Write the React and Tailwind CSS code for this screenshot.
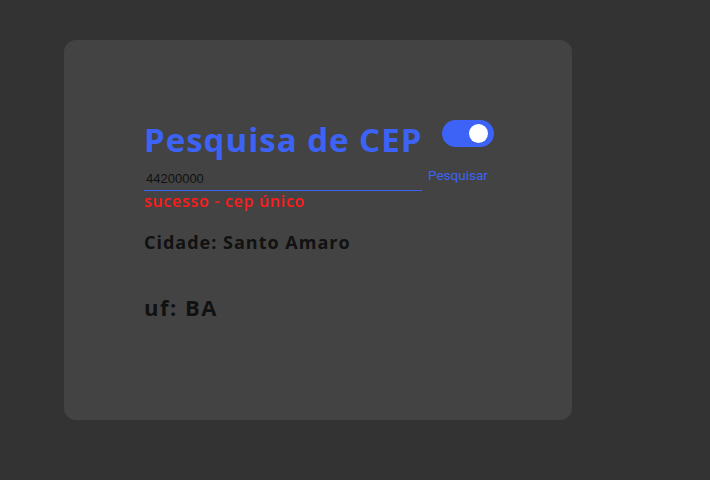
export default function App() {
  return (
    <div className="w-[710px] h-[480px] bg-[#333333] pt-10 pl-16">
      <div className="w-[508px] h-[380px] bg-[#434343] rounded-xl pl-20 pt-[80px]">
        <div className="flex items-start">
          <h1 className="w-[276px] whitespace-nowrap font-['Open_Sans',sans-serif] font-bold text-[33px] leading-[40px] text-[#3c63f5] tracking-[1px]">
            Pesquisa de CEP
          </h1>
          <div className="ml-[22px] w-[52px] h-[27px] rounded-full bg-[#3c63f5] flex items-center justify-end pr-[6px]">
            <div className="w-[19px] h-[19px] rounded-full bg-white"></div>
          </div>
        </div>
        <div className="flex items-start mt-[5px]">
          <div className="w-[278px] border-b border-[#3c63f5] pb-[1px]">
            <input
              defaultValue="44200000"
              className="w-full bg-transparent outline-none text-[13px] leading-[16px] px-[2px] text-[#111] font-['Liberation_Sans',sans-serif]"
            />
          </div>
          <button className="ml-[6px] text-[13.5px] text-[#3c63f5] font-['Roboto',sans-serif]">Pesquisar</button>
        </div>
        <p className="font-['Open_Sans',sans-serif] text-[16px] leading-[20px] text-[#ff1a1a] font-semibold tracking-[0.7px]">sucesso - cep único</p>
        <p className="mt-[20px] font-['Open_Sans',sans-serif] font-bold text-[18px] leading-[22px] text-[#111] tracking-[1px]">Cidade: Santo Amaro</p>
        <p className="mt-[40px] font-['Open_Sans',sans-serif] font-bold text-[22px] leading-[28px] text-[#111] tracking-[1.5px]">uf: BA</p>
      </div>
    </div>
  );
}
